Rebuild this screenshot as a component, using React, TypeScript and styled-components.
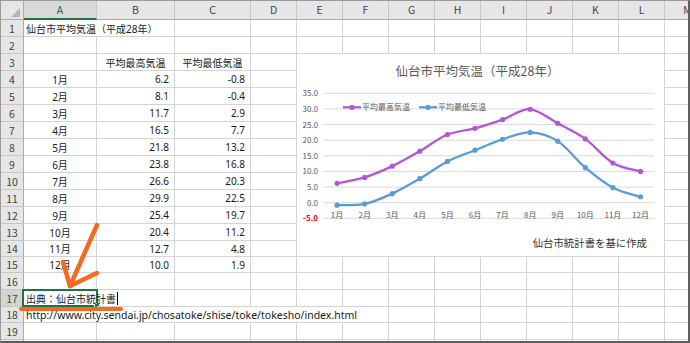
import React from 'react';
import styled, { createGlobalStyle } from 'styled-components';

const GlobalStyle = createGlobalStyle`
  html, body { margin: 0; padding: 0; background: #ffffff; }
  body { font-family: "Noto Sans CJK JP", "Noto Sans", sans-serif; }
`;

const FONT = '"Noto Sans CJK JP", "Noto Sans", sans-serif';
const CELL_FONT = '"Noto Sans", "Noto Sans CJK JP", sans-serif';
const GRID = '#d4d4d4';
const GREEN = '#217346';

const COLS = ['A', 'B', 'C', 'D', 'E', 'F', 'G', 'H', 'I', 'J', 'K', 'L', 'M'];

const maxT = [6.2, 8.1, 11.7, 16.5, 21.8, 23.8, 26.6, 29.9, 25.4, 20.4, 12.7, 10.0];
const minT = [-0.8, -0.4, 2.9, 7.7, 13.2, 16.8, 20.3, 22.5, 19.7, 11.2, 4.8, 1.9];

const Frame = styled.div`
  position: relative;
  width: 690px;
  height: 343px;
  box-sizing: border-box;
  overflow: hidden;
  border-top: 1px solid #9a9a9a;
  border-left: 1px solid #9a9a9a;
  border-right: 2px solid #5e5e5e;
  border-bottom: 2px solid #5e5e5e;
  background: #ffffff;
`;

const Sheet = styled.div`
  position: relative;
  display: grid;
  grid-template-columns: 23px 73px 78px 76px repeat(10, 46px);
  grid-template-rows: 19px repeat(13, 17px) 16px 16px 17px 17px 16px 17px 17px;
  width: max-content;
  font-family: ${FONT};
`;

const Corner = styled.div`
  position: relative;
  box-sizing: border-box;
  background: #e6e6e6;
  border-right: 1px solid #ababab;
  border-bottom: 1px solid #ababab;
  display: flex;
  align-items: flex-end;
  justify-content: flex-end;
  padding: 0 3px 2px 0;
`;

const ColHead = styled.div<{ $selected?: boolean }>`
  box-sizing: border-box;
  background: ${(p) => (p.$selected ? '#d9d9d9' : '#e6e6e6')};
  border-right: 1px solid #c6c6c6;
  border-bottom: ${(p) => (p.$selected ? `2px solid ${GREEN}` : '1px solid #ababab')};
  color: ${(p) => (p.$selected ? '#1d5c38' : '#444444')};
  font-size: 10.5px;
  display: flex;
  align-items: center;
  justify-content: center;
  padding-bottom: ${(p) => (p.$selected ? '0' : '1px')};
`;

const RowHead = styled.div<{ $selected?: boolean }>`
  box-sizing: border-box;
  background: ${(p) => (p.$selected ? '#d4d4d4' : '#e6e6e6')};
  border-right: 1px solid #ababab;
  border-bottom: 1px solid #c6c6c6;
  color: ${(p) => (p.$selected ? '#2b5a3c' : '#444444')};
  font-size: 10.5px;
  display: flex;
  align-items: center;
  justify-content: center;
`;

const Cell = styled.div<{ $align?: 'left' | 'center' | 'right'; $span?: number; $size?: number }>`
  position: relative;
  box-sizing: border-box;
  grid-column: span ${(p) => p.$span ?? 1};
  border-right: 1px solid ${GRID};
  border-bottom: 1px solid ${GRID};
  display: flex;
  align-items: center;
  justify-content: ${(p) => (p.$align === 'right' ? 'flex-end' : p.$align === 'center' ? 'center' : 'flex-start')};
  padding: ${(p) => (p.$align === 'right' ? '0 5px 0 0' : p.$align === 'center' ? '0' : '0 0 0 2px')};
  font-family: ${CELL_FONT};
  font-size: ${(p) => p.$size ?? 10}px;
  color: #1a1a1a;
  white-space: nowrap;
  overflow: visible;
  z-index: 1;
`;

const Selection = styled.div`
  position: absolute;
  left: -2px;
  top: -1px;
  width: 76px;
  height: 18px;
  box-sizing: border-box;
  border: 2px solid ${GREEN};
  pointer-events: none;
`;

const FillHandle = styled.div`
  position: absolute;
  right: -4px;
  bottom: -4px;
  width: 6px;
  height: 6px;
  box-sizing: border-box;
  background: ${GREEN};
  border: 1px solid #ffffff;
`;

const CellText = styled.span`
  position: relative;
  z-index: 2;
  display: inline-flex;
  align-items: center;
`;

const Caret = styled.span`
  display: inline-block;
  width: 0;
  height: 13px;
  border-left: 1px solid #000000;
  margin-left: 1px;
`;

const ChartPanel = styled.div`
  position: absolute;
  left: 296px;
  top: 53px;
  width: 367px;
  height: 202px;
  background: #ffffff;
  z-index: 3;
  display: flex;
  flex-direction: column;
  font-family: ${FONT};
`;

const ChartTitle = styled.div`
  height: 20px;
  line-height: 20px;
  padding-top: 7px;
  margin-bottom: 3px;
  padding-right: 6px;
  text-align: center;
  font-size: 12.5px;
  color: #595959;
  white-space: nowrap;
`;

const Plot = styled.svg`
  display: block;
  width: 367px;
  height: 152px;
`;

const ChartNote = styled.div`
  line-height: 14px;
  font-size: 10.4px;
  color: #333333;
  text-align: right;
  padding-right: 17px;
  white-space: nowrap;
`;

const Annotation = styled.svg`
  position: absolute;
  left: -1px;
  top: -1px;
  width: 690px;
  height: 343px;
  z-index: 5;
  pointer-events: none;
`;

const PX0 = 26.3;
const PX1 = 357.3;
const CAT = (PX1 - PX0) / 12;
const cx = (i: number) => PX0 + CAT * (i + 0.5);
const cy = (v: number) => 118.7 - 3.125 * v;

function smoothPath(vals: number[]): string {
  const pts = vals.map((v, i) => [cx(i), cy(v)]);
  let d = `M${pts[0][0].toFixed(2)},${pts[0][1].toFixed(2)}`;
  for (let i = 0; i < pts.length - 1; i++) {
    const p0 = pts[i - 1] || pts[i];
    const p1 = pts[i];
    const p2 = pts[i + 1];
    const p3 = pts[i + 2] || p2;
    const c1x = p1[0] + (p2[0] - p0[0]) / 6;
    const c1y = p1[1] + (p2[1] - p0[1]) / 6;
    const c2x = p2[0] - (p3[0] - p1[0]) / 6;
    const c2y = p2[1] - (p3[1] - p1[1]) / 6;
    d += ` C${c1x.toFixed(2)},${c1y.toFixed(2)} ${c2x.toFixed(2)},${c2y.toFixed(2)} ${p2[0].toFixed(2)},${p2[1].toFixed(2)}`;
  }
  return d;
}

const PURPLE = '#b256d4';
const BLUE = '#5b9bd5';

const Chart: React.FC = () => {
  const ticks = [35, 30, 25, 20, 15, 10, 5, 0, -5];
  return (
    <ChartPanel>
      <ChartTitle>仙台市平均気温（平成28年）</ChartTitle>
      <Plot viewBox="0 0 367 152">
        {ticks.map((t) => (
          <line key={t} x1={PX0} x2={PX1} y1={cy(t)} y2={cy(t)} stroke="#d9d9d9" strokeWidth={1} />
        ))}
        {ticks.map((t) => (
          <text
            key={`l${t}`}
            x={21}
            y={cy(t) + 3}
            textAnchor="end"
            fontSize={8}
            fontFamily={FONT}
            fill={t < 0 ? '#ff0000' : '#595959'}
            fontWeight={t < 0 ? 700 : 400}
          >
            {t.toFixed(1)}
          </text>
        ))}
        {maxT.map((_, i) => (
          <text key={`m${i}`} x={cx(i)} y={134} textAnchor="middle" fontSize={8} fontFamily={FONT} fill="#595959">
            {i + 1}月
          </text>
        ))}
        <path d={smoothPath(maxT)} fill="none" stroke={PURPLE} strokeWidth={2.25} strokeLinejoin="round" />
        <path d={smoothPath(minT)} fill="none" stroke={BLUE} strokeWidth={2.25} strokeLinejoin="round" />
        {maxT.map((v, i) => (
          <circle key={`pm${i}`} cx={cx(i)} cy={cy(v)} r={2.6} fill={PURPLE} />
        ))}
        {minT.map((v, i) => (
          <circle key={`bm${i}`} cx={cx(i)} cy={cy(v)} r={2.6} fill={BLUE} />
        ))}
        <line x1={46} x2={64} y1={23.3} y2={23.3} stroke={PURPLE} strokeWidth={2.25} />
        <circle cx={55} cy={23.3} r={2.6} fill={PURPLE} />
        <text x={65} y={26.3} fontSize={8} fontFamily={FONT} fill="#595959">平均最高気温</text>
        <line x1={122} x2={140} y1={23.3} y2={23.3} stroke={BLUE} strokeWidth={2.25} />
        <circle cx={131} cy={23.3} r={2.6} fill={BLUE} />
        <text x={141} y={26.3} fontSize={8} fontFamily={FONT} fill="#595959">平均最低気温</text>
      </Plot>
      <ChartNote>仙台市統計書を基に作成</ChartNote>
    </ChartPanel>
  );
};

type CellDef = { text?: React.ReactNode; align?: 'left' | 'center' | 'right'; span?: number; size?: number };

function buildRow(r: number): (CellDef | null)[] {
  const row: (CellDef | null)[] = COLS.map(() => ({}));
  if (r === 1) {
    row[0] = { text: '仙台市平均気温（平成28年）', align: 'left', span: 2 };
    row[1] = null;
  }
  if (r === 3) {
    row[1] = { text: '平均最高気温', align: 'center' };
    row[2] = { text: '平均最低気温', align: 'center' };
  }
  if (r >= 4 && r <= 15) {
    const i = r - 4;
    row[0] = { text: `${i + 1}月`, align: 'center' };
    row[1] = { text: maxT[i].toFixed(1), align: 'right' };
    row[2] = { text: minT[i].toFixed(1), align: 'right' };
  }
  if (r === 18) {
    row[0] = {
      text: 'http://www.city.sendai.jp/chosatoke/shise/toke/tokesho/index.html',
      align: 'left',
      span: 6,
      size: 10.5,
    };
    for (let k = 1; k < 6; k++) row[k] = null;
  }
  return row;
}

const ROWS = Array.from({ length: 20 }, (_, i) => i + 1);

export default function App() {
  return (
    <>
      <GlobalStyle />
      <Frame>
        <Sheet>
          <Corner>
            <svg width="9" height="9" viewBox="0 0 9 9">
              <polygon points="9,0 9,9 0,9" fill="#b5b5b5" />
            </svg>
          </Corner>
          {COLS.map((c) => (
            <ColHead key={c} $selected={c === 'A'}>
              {c}
            </ColHead>
          ))}
          {ROWS.map((r) => {
            const cells = buildRow(r);
            return (
              <React.Fragment key={r}>
                <RowHead $selected={r === 17}>{r}</RowHead>
                {cells.map((cd, ci) => {
                  if (cd === null) return null;
                  if (r === 17 && ci === 0) {
                    return (
                      <Cell key={ci} $align="left">
                        <Selection>
                          <FillHandle />
                        </Selection>
                        <CellText>
                          出典：仙台市統計書
                          <Caret />
                        </CellText>
                      </Cell>
                    );
                  }
                  return (
                    <Cell key={ci} $align={cd.align} $span={cd.span} $size={cd.size}>
                      {cd.text}
                    </Cell>
                  );
                })}
              </React.Fragment>
            );
          })}
          <Chart />
        </Sheet>
        <Annotation viewBox="0 0 690 343">
          <g stroke="#f36b21" strokeWidth={4.5} strokeLinecap="round" strokeLinejoin="round" fill="none">
            <line x1={97} y1={225} x2={70} y2={286} />
            <polyline points="63,262 70,286 97,273" />
            <line x1={21} y1={309} x2={121} y2={309} strokeWidth={4} />
          </g>
        </Annotation>
      </Frame>
    </>
  );
}
